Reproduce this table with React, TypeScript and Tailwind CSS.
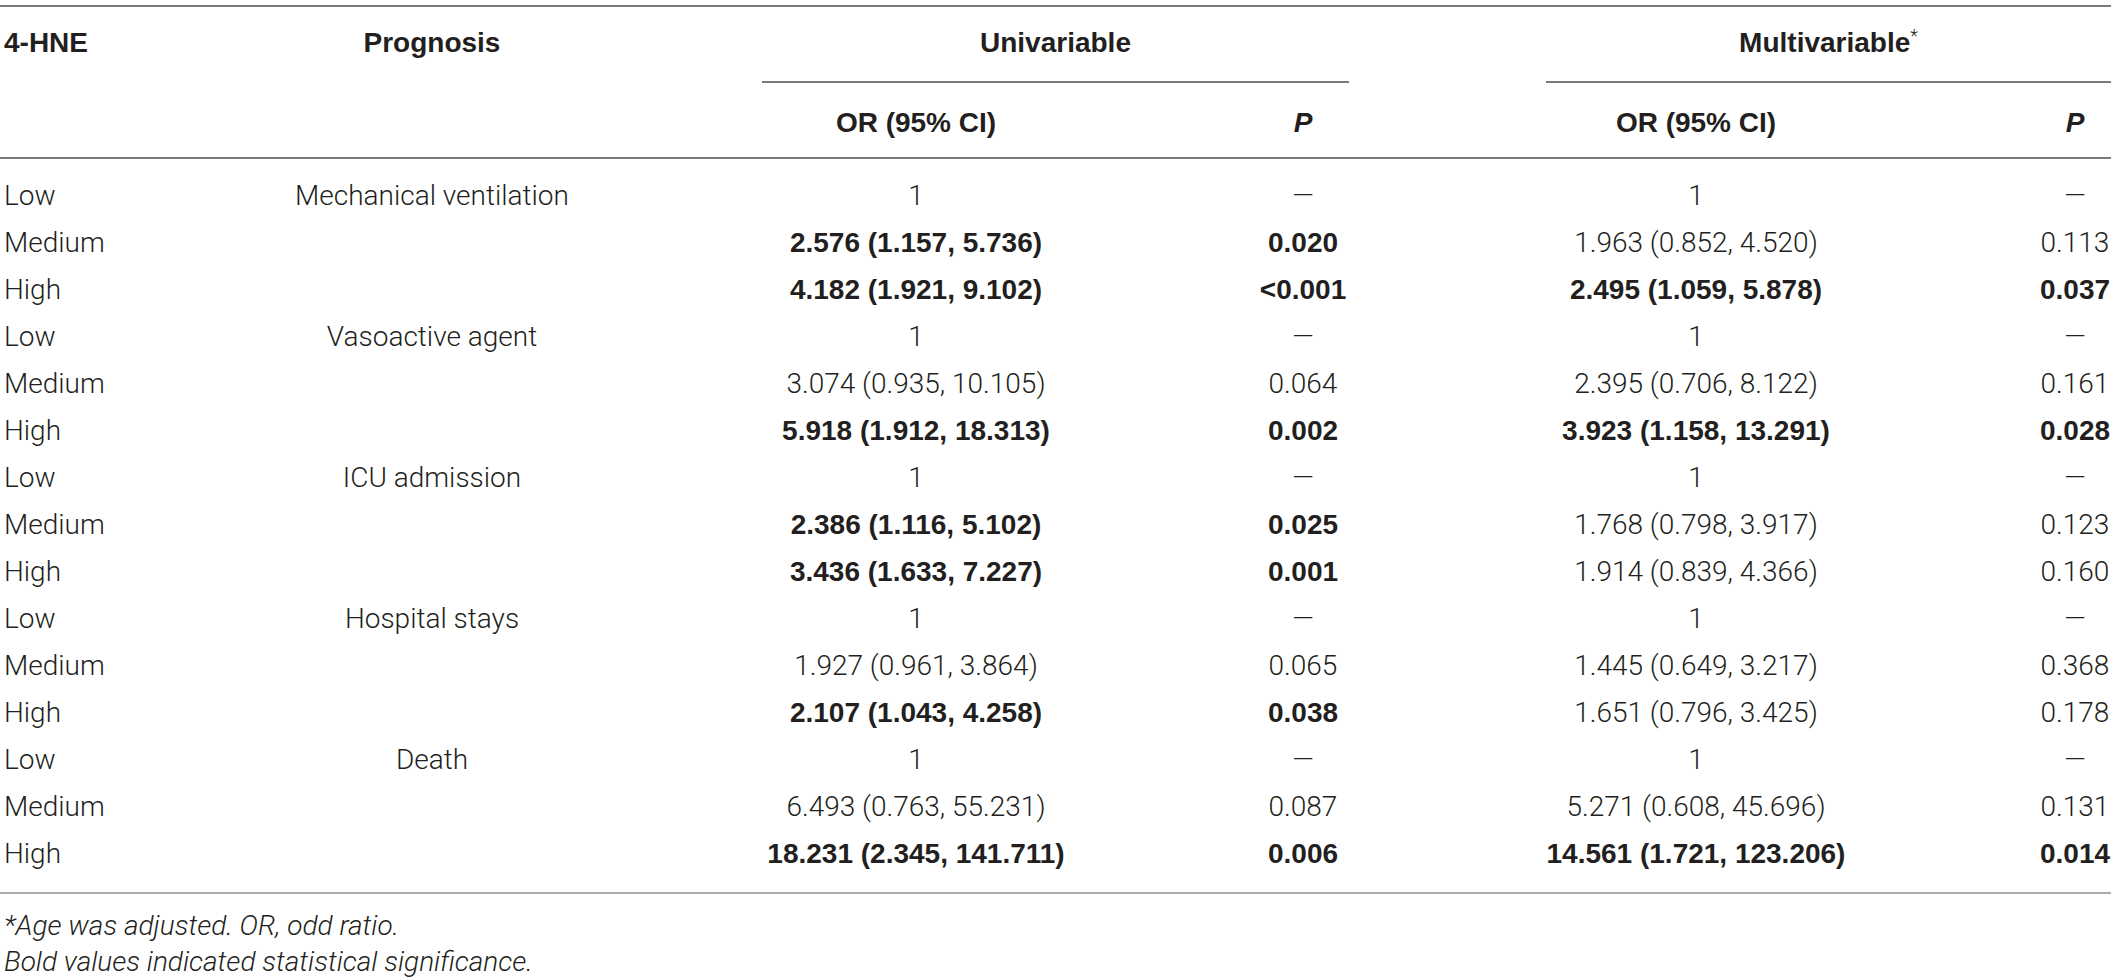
type Row = {
  level: string;
  prognosis?: string;
  uniOr: string;
  uniP: string;
  multiOr: string;
  multiP: string;
  uniBold?: boolean;
  multiBold?: boolean;
};

const rows: Row[] = [
  { level: "Low", prognosis: "Mechanical ventilation", uniOr: "1", uniP: "—", multiOr: "1", multiP: "—" },
  { level: "Medium", uniOr: "2.576 (1.157, 5.736)", uniP: "0.020", multiOr: "1.963 (0.852, 4.520)", multiP: "0.113", uniBold: true },
  { level: "High", uniOr: "4.182 (1.921, 9.102)", uniP: "<0.001", multiOr: "2.495 (1.059, 5.878)", multiP: "0.037", uniBold: true, multiBold: true },
  { level: "Low", prognosis: "Vasoactive agent", uniOr: "1", uniP: "—", multiOr: "1", multiP: "—" },
  { level: "Medium", uniOr: "3.074 (0.935, 10.105)", uniP: "0.064", multiOr: "2.395 (0.706, 8.122)", multiP: "0.161" },
  { level: "High", uniOr: "5.918 (1.912, 18.313)", uniP: "0.002", multiOr: "3.923 (1.158, 13.291)", multiP: "0.028", uniBold: true, multiBold: true },
  { level: "Low", prognosis: "ICU admission", uniOr: "1", uniP: "—", multiOr: "1", multiP: "—" },
  { level: "Medium", uniOr: "2.386 (1.116, 5.102)", uniP: "0.025", multiOr: "1.768 (0.798, 3.917)", multiP: "0.123", uniBold: true },
  { level: "High", uniOr: "3.436 (1.633, 7.227)", uniP: "0.001", multiOr: "1.914 (0.839, 4.366)", multiP: "0.160", uniBold: true },
  { level: "Low", prognosis: "Hospital stays", uniOr: "1", uniP: "—", multiOr: "1", multiP: "—" },
  { level: "Medium", uniOr: "1.927 (0.961, 3.864)", uniP: "0.065", multiOr: "1.445 (0.649, 3.217)", multiP: "0.368" },
  { level: "High", uniOr: "2.107 (1.043, 4.258)", uniP: "0.038", multiOr: "1.651 (0.796, 3.425)", multiP: "0.178", uniBold: true },
  { level: "Low", prognosis: "Death", uniOr: "1", uniP: "—", multiOr: "1", multiP: "—" },
  { level: "Medium", uniOr: "6.493 (0.763, 55.231)", uniP: "0.087", multiOr: "5.271 (0.608, 45.696)", multiP: "0.131" },
  { level: "High", uniOr: "18.231 (2.345, 141.711)", uniP: "0.006", multiOr: "14.561 (1.721, 123.206)", multiP: "0.014", uniBold: true, multiBold: true },
];

const grid = "grid grid-cols-[232px_400px_568px_206px_580px_125px]";
const light = "font-['Roboto',_'Liberation_Sans',_sans-serif] font-light";
const bold = "font-['Liberation_Sans',_Arial,_sans-serif] font-bold";

function Cell({ text, strong, className = "" }: { text: string; strong?: boolean; className?: string }) {
  return <div className={`${strong ? bold : light} whitespace-nowrap ${className}`}>{text}</div>;
}

export default function App() {
  return (
    <div className="bg-white w-[2117px] h-[978px] overflow-hidden text-[#231f20] text-[28px] leading-[47px] pt-[5px]">
      <div className="w-[2111px]">
        <div className="h-[2px] bg-[#7a7a7a]" />

        {/* header, first level */}
        <div className={`${grid} h-[76px] leading-[36px]`}>
          <div className={`${bold} pl-[4px] pt-[18px]`}>4-HNE</div>
          <div className={`${bold} text-center pt-[18px]`}>Prognosis</div>
          <div className="col-span-2 flex flex-col justify-between pt-[18px]">
            <div className={`${bold} text-center pl-[130px] pr-[57px]`}>Univariable</div>
            <div className="h-[2px] bg-[#7a7a7a] ml-[130px] mr-[57px]" />
          </div>
          <div className="col-span-2 flex flex-col justify-between pt-[18px]">
            <div className={`${bold} text-center pl-[140px]`}>
              Multivariable
              <span className={`${light} text-[18px] align-top leading-none relative top-[2px]`}>*</span>
            </div>
            <div className="h-[2px] bg-[#7a7a7a] ml-[140px]" />
          </div>
        </div>

        {/* header, second level */}
        <div className={`${grid} h-[74px] leading-[36px] pt-[22px]`}>
          <div />
          <div />
          <div className={`${bold} text-center`}>OR (95% CI)</div>
          <div className={`${bold} italic text-center`}>P</div>
          <div className={`${bold} text-center`}>OR (95% CI)</div>
          <div className={`${bold} italic text-center pl-[53px]`}>P</div>
        </div>
        <div className="h-[2px] bg-[#7a7a7a]" />

        {/* body */}
        <div className="pt-[13px] pb-[15px]">
          {rows.map((r, i) => (
            <div key={i} className={`${grid} h-[47px]`}>
              <Cell text={r.level} className="pl-[4px]" />
              <Cell text={r.prognosis ?? ""} className="text-center" />
              <Cell text={r.uniOr} strong={r.uniBold} className="text-center" />
              <Cell text={r.uniP} strong={r.uniBold} className="text-center" />
              <Cell text={r.multiOr} strong={r.multiBold} className="text-center" />
              <Cell text={r.multiP} strong={r.multiBold} className="text-center pl-[53px]" />
            </div>
          ))}
        </div>
        <div className="h-[2px] bg-[#ababab]" />

        <div className={`${light} italic leading-[36px] pt-[14px] pl-[4px]`}>
          <p>*Age was adjusted. OR, odd ratio.</p>
          <p>Bold values indicated statistical significance.</p>
        </div>
      </div>
    </div>
  );
}
